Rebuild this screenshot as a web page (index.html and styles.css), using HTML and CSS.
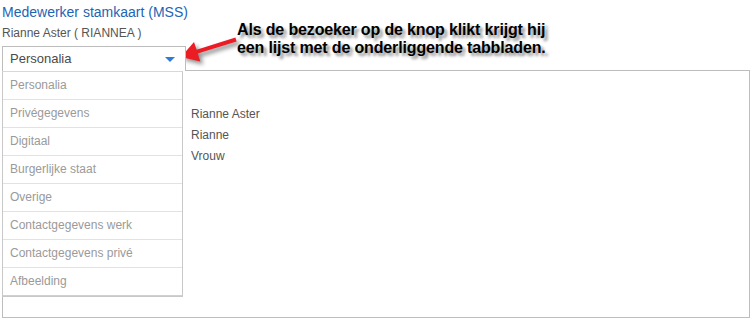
FILE: index.html
```html
<!DOCTYPE html>
<html lang="nl">
<head>
  <meta charset="UTF-8">
  <title>Medewerker stamkaart (MSS)</title>
  <link rel="stylesheet" href="styles.css">
</head>
<body>
  <div class="page">
    <h1 class="title">Medewerker stamkaart (MSS)</h1>
    <div class="user">Rianne Aster ( RIANNEA )</div>

    <div class="tabs">
      <div class="tab-select">
        <span>Personalia</span>
        <span class="caret"></span>
      </div>

      <div class="panel">
        <div class="panel-side"></div>
        <div class="panel-body">
          <div>Rianne Aster</div>
          <div>Rianne</div>
          <div>Vrouw</div>
        </div>
      </div>

      <ul class="tab-list">
        <li>Personalia</li>
        <li>Privégegevens</li>
        <li>Digitaal</li>
        <li>Burgerlijke staat</li>
        <li>Overige</li>
        <li>Contactgegevens werk</li>
        <li>Contactgegevens privé</li>
        <li>Afbeelding</li>
      </ul>
    </div>
  </div>

  <!-- annotation callout -->
  <svg class="arrow" width="70" height="40" viewBox="175 30 70 40">
    <polygon fill="#ec1c24" points="181,57 194,42 196.6,49.8 235.4,37.6 236.6,41.4 197.8,53.6 200.3,61.5"/>
  </svg>
  <div class="note">Als de bezoeker op de knop klikt krijgt hij<br>een lijst met de onderliggende tabbladen.</div>
</body>
</html>
```

FILE: styles.css
```css
* {
  box-sizing: border-box;
}

body {
  margin: 0;
  background: #ffffff;
  font-family: 'Liberation Sans', Arial, sans-serif;
  color: #555555;
}

.page {
  padding: 4px 0 0 2px;
  width: 750px;
}

.title {
  margin: 0;
  font-size: 14px;
  line-height: 16px;
  font-weight: normal;
  color: #1e64b4;
}

.user {
  margin-top: 6px;
  font-size: 12px;
  line-height: 14px;
  color: #555555;
}

.tabs {
  position: relative;
  margin-top: 6px;
}

.tab-select {
  position: relative;
  z-index: 1;
  width: 184px;
  height: 25px;
  margin-bottom: -1px;
  border: 1px solid #bdbdbd;
  border-bottom: none;
  padding: 0 10px 1px 7px;
  display: flex;
  align-items: center;
  justify-content: space-between;
  font-size: 13px;
  line-height: 22px;
  color: #4a4a4a;
  background: #ffffff;
}

.caret {
  width: 0;
  height: 0;
  border-left: 5px solid transparent;
  border-right: 5px solid transparent;
  border-top: 5px solid #2a7fd4;
  margin-top: 1px;
}

.panel {
  width: 748px;
  height: 248px;
  border: 1px solid #bdbdbd;
  display: flex;
}

.panel-side {
  width: 188px;
}

.panel-body {
  padding-top: 33px;
  font-size: 12px;
  line-height: 21px;
  color: #555555;
}

.tab-list {
  position: absolute;
  z-index: 2;
  left: 0;
  top: 25px;
  width: 181px;
  margin: 0;
  padding: 0;
  list-style: none;
  background: #ffffff;
  border: 1px solid #c8c8c8;
  border-top-color: #d8d8d8;
}

.tab-list li {
  height: 28px;
  padding-left: 7px;
  border-bottom: 1px solid #e2e2e2;
  font-size: 12px;
  line-height: 27px;
  color: #9a9a9a;
}

.tab-list li:last-child {
  border-bottom-color: #d0d0d0;
}

.arrow {
  position: absolute;
  left: 175px;
  top: 30px;
  overflow: visible;
  filter: drop-shadow(3px 3px 2px rgba(0, 0, 0, 0.45));
}

.note {
  position: absolute;
  left: 237px;
  top: 21px;
  font-size: 16px;
  line-height: 18px;
  font-weight: bold;
  letter-spacing: -0.15px;
  color: #000000;
  text-shadow: 3px 3px 3px rgba(0, 0, 0, 0.45);
}
```
